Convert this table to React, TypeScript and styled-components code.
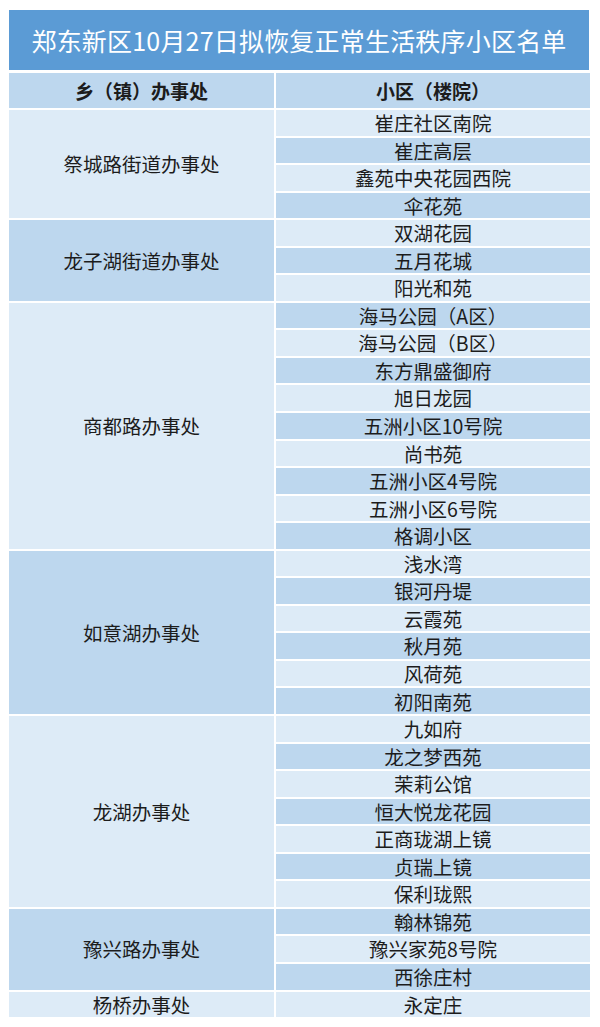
import React from 'react';
import styled, { createGlobalStyle } from 'styled-components';

const groups: { office: string; communities: string[] }[] = [
  { office: '祭城路街道办事处', communities: ['崔庄社区南院', '崔庄高层', '鑫苑中央花园西院', '伞花苑'] },
  { office: '龙子湖街道办事处', communities: ['双湖花园', '五月花城', '阳光和苑'] },
  {
    office: '商都路办事处',
    communities: ['海马公园（A区）', '海马公园（B区）', '东方鼎盛御府', '旭日龙园', '五洲小区10号院', '尚书苑', '五洲小区4号院', '五洲小区6号院', '格调小区'],
  },
  { office: '如意湖办事处', communities: ['浅水湾', '银河丹堤', '云霞苑', '秋月苑', '风荷苑', '初阳南苑'] },
  { office: '龙湖办事处', communities: ['九如府', '龙之梦西苑', '茉莉公馆', '恒大悦龙花园', '正商珑湖上镜', '贞瑞上镜', '保利珑熙'] },
  { office: '豫兴路办事处', communities: ['翰林锦苑', '豫兴家苑8号院', '西徐庄村'] },
  { office: '杨桥办事处', communities: ['永定庄'] },
];

const colors = {
  title: '#5b9bd5',
  dark: '#bdd7ee',
  light: '#ddebf7',
  text: '#1c1c1c',
};

const GlobalStyle = createGlobalStyle`
  html, body {
    margin: 0;
    padding: 0;
    background: #ffffff;
  }
  body {
    font-family: "Noto Sans CJK SC", "Noto Sans", sans-serif;
    color: ${colors.text};
  }
`;

const Page = styled.div`
  padding: 10px 0 0 9px;
  width: 581px;
`;

const Title = styled.h1`
  margin: 0 0 3px;
  height: 60px;
  width: 580px;
  display: flex;
  align-items: center;
  justify-content: center;
  background: ${colors.title};
  color: #ffffff;
  font-size: 25px;
  font-weight: 400;
  line-height: 1;
  letter-spacing: 0.2px;
`;

const Table = styled.div`
  display: grid;
  grid-template-columns: 265px 314px;
  grid-template-rows: 35px;
  grid-auto-rows: 25.55px;
  gap: 2px;
`;

const Cell = styled.div<{ $shade: 'dark' | 'light'; $span?: number }>`
  display: flex;
  align-items: center;
  justify-content: center;
  background: ${(p) => colors[p.$shade]};
  font-size: 19.5px;
  line-height: 1;
  white-space: nowrap;
  grid-row: ${(p) => (p.$span ? `span ${p.$span}` : 'auto')};
`;

const HeadCell = styled(Cell)`
  font-size: 19px;
  font-weight: 700;
`;

const OfficeCell = styled(Cell)`
  grid-column: 1;
`;

const CommunityCell = styled(Cell)`
  grid-column: 2;
`;

const App: React.FC = () => {
  let index = 0;

  return (
    <>
      <GlobalStyle />
      <Page>
        <Title>郑东新区10月27日拟恢复正常生活秩序小区名单</Title>
        <Table>
          <HeadCell $shade="dark">乡（镇）办事处</HeadCell>
          <HeadCell $shade="dark">小区（楼院）</HeadCell>
          {groups.map((group, gi) => {
            const cells = [
              <OfficeCell key={`o-${gi}`} $shade={gi % 2 === 0 ? 'light' : 'dark'} $span={group.communities.length}>
                {group.office}
              </OfficeCell>,
            ];
            group.communities.forEach((name) => {
              const shade = index % 2 === 0 ? 'light' : 'dark';
              index += 1;
              cells.push(
                <CommunityCell key={`c-${index}`} $shade={shade}>
                  {name}
                </CommunityCell>,
              );
            });
            return cells;
          })}
        </Table>
      </Page>
    </>
  );
};

export default App;
